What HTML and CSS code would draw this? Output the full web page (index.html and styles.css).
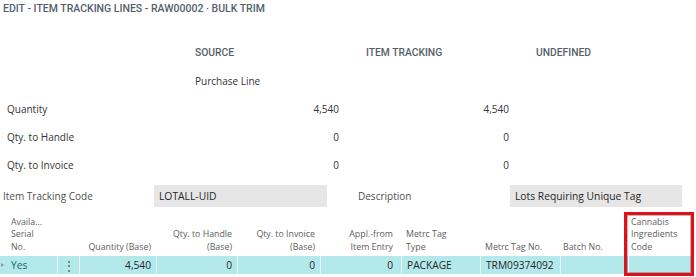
FILE: index.html
```html
<!DOCTYPE html>
<html>
<head>
<meta charset="utf-8">
<link rel="stylesheet" href="styles.css">
</head>
<body>
<div class="page">
  <div class="title">EDIT - ITEM TRACKING LINES - RAW00002 · BULK TRIM</div>

  <div class="summary">
    <div class="cell"></div>
    <div class="cell head">SOURCE</div>
    <div class="cell head">ITEM TRACKING</div>
    <div class="cell head">UNDEFINED</div>

    <div class="cell"></div>
    <div class="cell text">Purchase Line</div>
    <div class="cell"></div>
    <div class="cell"></div>

    <div class="cell label">Quantity</div>
    <div class="cell num">4,540</div>
    <div class="cell num">4,540</div>
    <div class="cell"></div>

    <div class="cell label">Qty. to Handle</div>
    <div class="cell num">0</div>
    <div class="cell num">0</div>
    <div class="cell"></div>

    <div class="cell label">Qty. to Invoice</div>
    <div class="cell num">0</div>
    <div class="cell num">0</div>
    <div class="cell"></div>
  </div>

  <div class="fields">
    <div class="flabel">Item Tracking Code</div>
    <div class="fbox">LOTALL-UID</div>
    <div class="flabel desc">Description</div>
    <div class="fbox">Lots Requiring Unique Tag</div>
  </div>

  <div class="table">
    <div class="th first">Availa...<br>Serial<br>No.</div>
    <div class="th"></div>
    <div class="th r">Quantity (Base)</div>
    <div class="th r">Qty. to Handle<br>(Base)</div>
    <div class="th r">Qty. to Invoice<br>(Base)</div>
    <div class="th r r6">Appl.-from<br>Item Entry</div>
    <div class="th l7">Metrc Tag<br>Type</div>
    <div class="th l8">Metrc Tag No.</div>
    <div class="th l9">Batch No.</div>
    <div class="th l10">Cannabis<br>Ingredients<br>Code</div>

    <div class="td first"><span class="arrow"></span><span class="yes">Yes</span></div>
    <div class="td dots">⋮</div>
    <div class="td r">4,540</div>
    <div class="td r">0</div>
    <div class="td r">0</div>
    <div class="td r r6">0</div>
    <div class="td l7">PACKAGE</div>
    <div class="td l8">TRM09374092</div>
    <div class="td l9"></div>
    <div class="td l10"></div>
  </div>

  <div class="highlight"></div>
</div>
</body>
</html>
```

FILE: styles.css
```css
html, body {
  margin: 0;
  padding: 0;
  background: #ffffff;
}

body {
  font-family: "Open Sans", "Noto Sans", sans-serif;
  font-size: 10px;
  color: #262626;
}

.page {
  position: relative;
  width: 696px;
  height: 277px;
  overflow: hidden;
}

.title {
  font-family: Roboto, "Liberation Sans", sans-serif;
  font-weight: 500;
  font-size: 10.5px;
  letter-spacing: 0;
  color: #56606b;
  padding: 2px 0 0 3px;
  height: 37px;
  line-height: 13px;
}

.summary {
  display: grid;
  grid-template-columns: 195px 171px 170px 1fr;
  grid-auto-rows: 28px;
}

.summary .cell {
  line-height: 28px;
  white-space: nowrap;
}

.summary .head {
  font-family: Roboto, "Liberation Sans", sans-serif;
  font-weight: 500;
  font-size: 10.3px;
  letter-spacing: 0;
  color: #56606b;
}

.summary .text {
  color: #333333;
}

.summary .label {
  padding-left: 7px;
  color: #333333;
}

.summary .num {
  text-align: right;
  padding-right: 27px;
  color: #333333;
}

.fields {
  display: grid;
  grid-template-columns: 154px 173px 183px 172px;
  height: 22px;
  margin-top: 6px;
  align-items: center;
}

.flabel {
  padding-left: 3px;
  color: #505050;
  font-size: 10px;
}

.flabel.desc {
  padding-left: 31px;
}

.fbox {
  background: #e6e6e6;
  height: 22px;
  line-height: 22px;
  padding-left: 5px;
  color: #262626;
  white-space: nowrap;
  font-size: 10.3px;
}

.table {
  display: grid;
  grid-template-columns: 57px 22px 77px 81px 83px 81px 79px 80px 68px 64px;
  margin-top: 9px;
}

.th {
  font-size: 8.8px;
  line-height: 12.4px;
  color: #605e5c;
  align-self: end;
  padding-bottom: 3px;
  white-space: nowrap;
}

.th.first {
  padding-left: 11px;
}

.r {
  text-align: right;
  padding-right: 5px;
}

.r6 {
  padding-right: 8px;
}

.l7 { padding-left: 5px; }
.l8 { padding-left: 5px; }
.l9 { padding-left: 3px; }
.l10 { padding-left: 3px; }

.td {
  background: #b4e9ec;
  height: 18px;
  line-height: 19px;
  font-size: 10.2px;
  color: #262626;
  border-left: 1px solid #e4f6f7;
  white-space: nowrap;
}

.td.first {
  border-left: none;
  position: relative;
  padding-left: 11px;
}

.arrow {
  position: absolute;
  left: 1px;
  top: 7px;
  width: 0;
  height: 0;
  border-top: 2.5px solid transparent;
  border-bottom: 2.5px solid transparent;
  border-left: 3px solid #8a9a9c;
}

.yes {
  color: #17666a;
}

.td.dots {
  text-align: center;
  color: #555555;
  font-size: 12px;
}

.highlight {
  position: absolute;
  left: 624px;
  top: 212px;
  width: 64px;
  height: 58px;
  border: 3px solid #e3101a;
  box-shadow: inset 0 0 0 1px rgba(60, 60, 60, 0.35);
}
```
